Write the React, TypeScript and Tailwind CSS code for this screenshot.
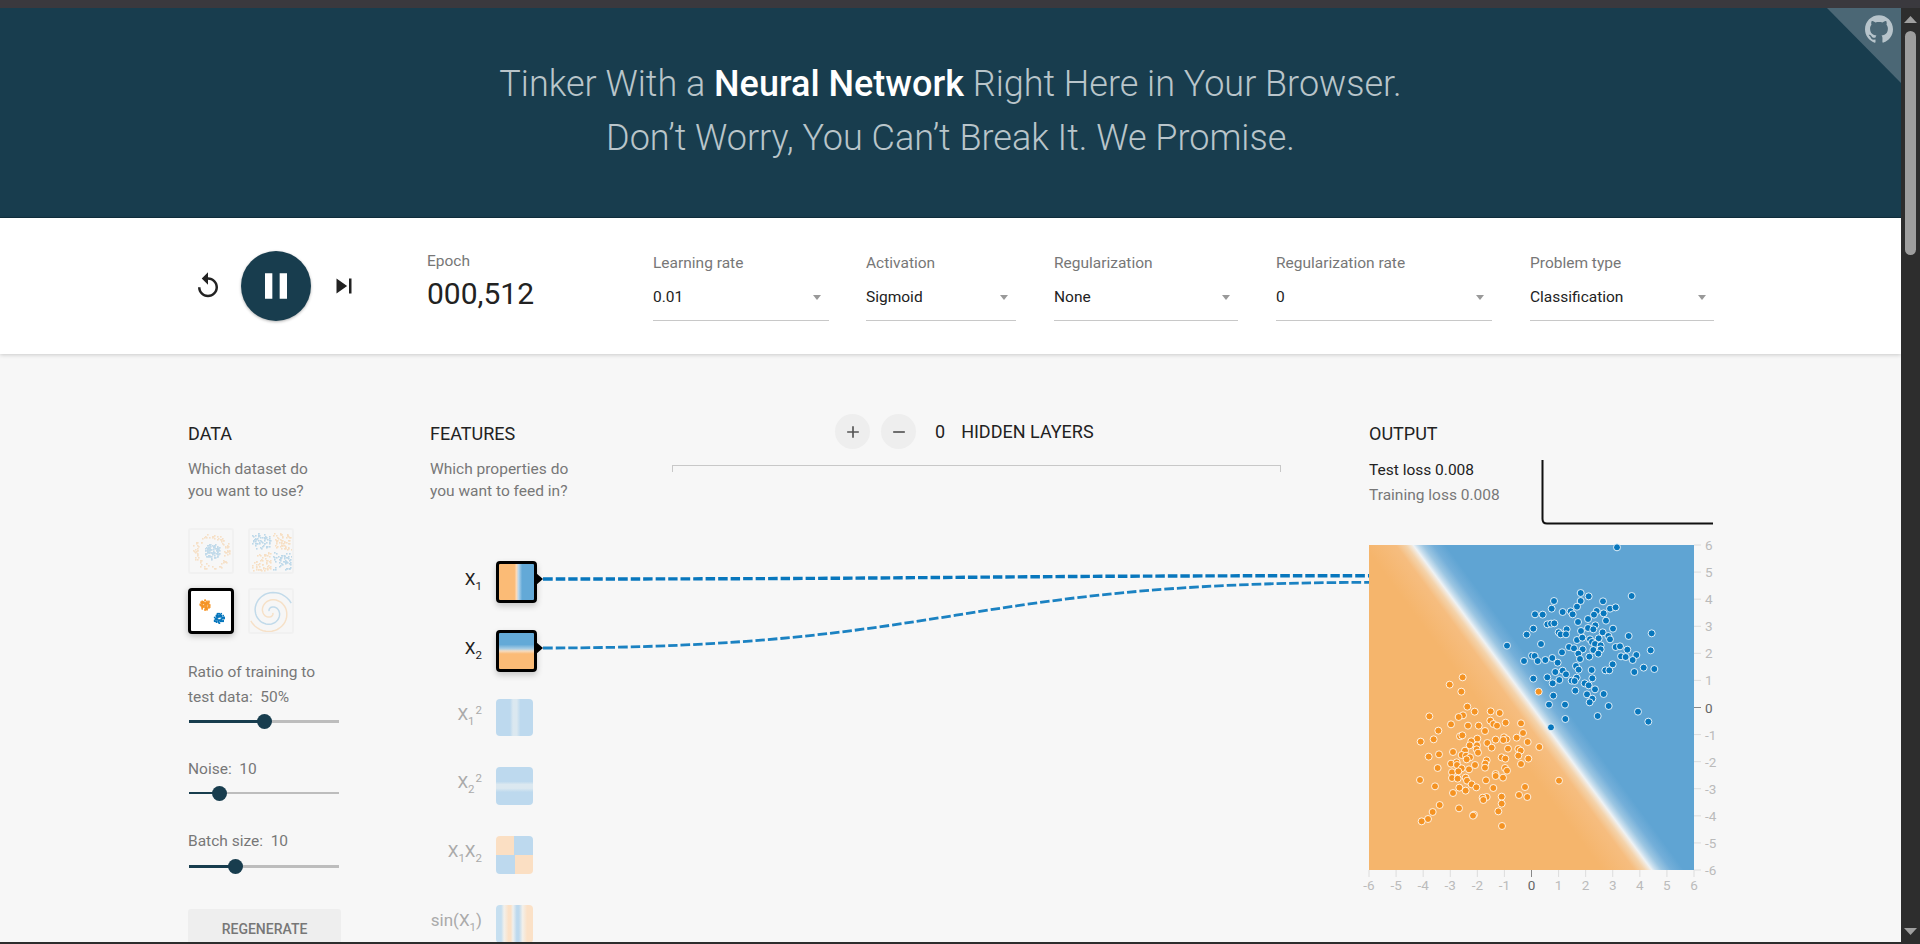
import React from "react";
import { SiGithub } from "react-icons/si";

const blue: [number, number][] = [[801,412],[845,558],[692,549],[716,559],[612,573],[692,573],[759,574],[605,596],[681,590],[780,596],[797,592],[740,603],[555,613],[578,614],[638,606],[662,604],[668,613],[732,614],[761,610],[714,627],[768,632],[684,636],[592,643],[603,641],[613,640],[736,646],[550,656],[714,654],[730,658],[789,656],[693,663],[650,658],[626,667],[632,673],[648,673],[758,667],[530,674],[905,670],[836,678],[775,678],[681,690],[697,683],[720,688],[746,685],[780,688],[726,696],[735,702],[573,702],[471,707],[752,706],[657,711],[672,715],[698,718],[730,720],[752,718],[797,711],[810,709],[832,719],[902,721],[636,727],[685,731],[745,731],[546,737],[554,738],[859,735],[813,739],[827,741],[848,750],[690,747],[718,740],[607,744],[586,750],[563,753],[522,753],[623,758],[788,763],[678,768],[686,779],[725,780],[766,781],[778,781],[881,773],[913,777],[853,786],[616,786],[638,782],[648,793],[592,802],[550,806],[680,803],[727,805],[628,810],[665,812],[674,813],[608,820],[704,820],[716,826],[735,838],[676,842],[610,857],[711,853],[761,852],[727,866],[719,877],[597,884],[645,884],[776,888],[864,905],[895,935],[743,918],[646,927],[603,952]];
const orangeTop: [number, number][] = [[338,802],[299,824],[334,845],[566,845]];
const orange5: [number, number][] = [[352,80],[339,106],[374,95],[326,111],[238,109],[422,94],[449,99],[421,122],[430,132],[441,137],[467,128],[513,130],[303,133],[354,137],[386,137],[265,152],[405,153],[519,159],[330,169],[337,166],[251,178],[212,185],[382,176],[364,184],[437,179],[462,172],[470,178],[500,173],[460,180],[533,186],[359,196],[381,196],[412,189],[425,203],[474,206],[505,207],[568,201],[512,212],[309,216],[345,212],[380,208],[384,218],[267,223],[335,225],[348,227],[360,232],[236,230],[455,232],[466,236],[505,227],[535,236],[410,241],[350,238],[303,251],[320,247],[321,255],[375,255],[406,251],[405,263],[513,252],[263,264],[335,265],[357,268],[465,264],[471,272],[306,277],[325,274],[437,282],[437,288],[306,294],[323,296],[347,293],[351,302],[459,293],[210,300],[408,301],[627,302],[365,313],[379,322],[255,319],[328,323],[430,324],[525,321],[347,332],[309,339],[507,345],[532,351],[455,350],[410,351],[398,353],[400,360],[269,375],[455,371],[327,385],[248,396],[445,394],[372,404],[369,407],[234,417],[215,424],[456,438]];

function rng(seed: number) {
  let s = seed;
  return () => {
    s = (s * 16807) % 2147483647;
    return s / 2147483647;
  };
}

const ORANGE = "#f59322";
const BLUE = "#0877bd";

function Pixels({ pts, fill }: { pts: [number, number][]; fill: string }) {
  return (
    <g fill={fill}>
      {pts.map((p, i) => (
        <rect key={i} x={Math.round(p[0])} y={Math.round(p[1])} width="1.6" height="1.6" />
      ))}
    </g>
  );
}

function blob(cx: number, cy: number, r: number, n: number, seed: number) {
  const R = rng(seed);
  const out: [number, number][] = [];
  for (let i = 0; i < n; i++) {
    const a = R() * Math.PI * 2;
    const d = Math.sqrt(R()) * r;
    out.push([cx + Math.cos(a) * d, cy + Math.sin(a) * d]);
  }
  return out;
}

function ring(cx: number, cy: number, r: number, n: number, seed: number) {
  const R = rng(seed);
  const out: [number, number][] = [];
  for (let i = 0; i < n; i++) {
    const a = R() * Math.PI * 2;
    const d = r + (R() - 0.5) * 6;
    out.push([cx + Math.cos(a) * d, cy + Math.sin(a) * d]);
  }
  return out;
}

function rectPts(x0: number, y0: number, x1: number, y1: number, n: number, seed: number) {
  const R = rng(seed);
  const out: [number, number][] = [];
  for (let i = 0; i < n; i++) out.push([x0 + R() * (x1 - x0), y0 + R() * (y1 - y0)]);
  return out;
}

function spiral(offset: number) {
  const pts: string[] = [];
  for (let t = 0; t < 2.6 * Math.PI * 1.05; t += 0.15) {
    const r = 2 + t * 2.35;
    pts.push(`${(22 + Math.cos(t + offset) * r).toFixed(1)},${(22 + Math.sin(t + offset) * r).toFixed(1)}`);
  }
  return pts.join(" ");
}

function DataThumb({ kind }: { kind: "circle" | "xor" | "gauss" | "spiral" }) {
  const selected = kind === "gauss";
  return (
    <div
      className={
        selected
          ? "w-[46px] h-[46px] rounded-[4px] border-[3px] border-black bg-white shadow-[0_2px_6px_rgba(0,0,0,0.25)] overflow-hidden"
          : "w-[46px] h-[46px] rounded-[3px] border-2 border-[#f1f1f1] overflow-hidden"
      }
    >
      <svg viewBox="0 0 42 42" className="w-full h-full block">
        {kind === "circle" && (
          <g opacity="0.22">
            <Pixels pts={ring(21, 21, 16, 90, 11)} fill={ORANGE} />
            <Pixels pts={blob(22, 21, 8, 90, 23)} fill={BLUE} />
          </g>
        )}
        {kind === "xor" && (
          <g opacity="0.24">
            <Pixels pts={rectPts(2, 2, 20, 19, 55, 5)} fill={BLUE} />
            <Pixels pts={rectPts(23, 22, 41, 40, 55, 7)} fill={BLUE} />
            <Pixels pts={rectPts(23, 2, 41, 19, 55, 9)} fill={ORANGE} />
            <Pixels pts={rectPts(2, 22, 20, 40, 55, 13)} fill={ORANGE} />
          </g>
        )}
        {kind === "gauss" && (
          <g>
            <Pixels pts={blob(14, 14, 5.5, 70, 31)} fill={ORANGE} />
            <Pixels pts={blob(29, 28, 5.5, 70, 37)} fill={BLUE} />
          </g>
        )}
        {kind === "spiral" && (
          <g fill="none" strokeWidth="1.5" opacity="0.22" transform="translate(-1,0)">
            <polyline points={spiral(3.6)} stroke={BLUE} />
            <polyline points={spiral(0.46)} stroke={ORANGE} />
          </g>
        )}
      </svg>
    </div>
  );
}

function Select({ label, value, className }: { label: string; value: string; className: string }) {
  return (
    <div className={className}>
      <div className="text-[15.5px] leading-[20px] text-[#777]">{label}</div>
      <div className="mt-[10px] h-[29px] flex items-center justify-between pr-[8px] border-b border-[#c8c8c8] pb-[8px] box-content">
        <span className="text-[15.5px] leading-[20px] text-[#222]">{value}</span>
        <svg width="8" height="5" viewBox="0 0 8 5">
          <polygon points="0,0 8,0 4,5" fill="#999" />
        </svg>
      </div>
    </div>
  );
}

function Slider({ dark, thick }: { dark: string; thick?: boolean }) {
  const h = thick ? "h-[3px]" : "h-[2px]";
  return (
    <div className="ml-[1px] w-[150px] h-4 flex items-center">
      <div className={`${dark} ${h} bg-[#183d4e]`} />
      <div className="w-[15px] h-[15px] rounded-full bg-[#183d4e] -mx-[7px] z-10 shrink-0" />
      <div className={`flex-1 ${h} bg-[#bdbdbd]`} />
    </div>
  );
}

function Sub({ n }: { n: string }) {
  return <span className="text-[11.5px] relative top-[5px]">{n}</span>;
}
function Sup({ n }: { n: string }) {
  return <span className="text-[11.5px] relative -top-[6px] ml-[1px]">{n}</span>;
}

function FeatureRow({
  label,
  thumb,
  active,
}: {
  label: React.ReactNode;
  thumb: string;
  active?: boolean;
}) {
  return (
    <div className="h-[68.8px] flex items-start">
      <div
        className={
          active
            ? "w-[52px] text-right text-[17px] leading-[24px] text-[#222] mt-[6px]"
            : "w-[52px] text-right text-[17px] leading-[24px] text-[#aaa] mt-[3px] whitespace-nowrap flex justify-end"
        }
      >
        <span className="whitespace-nowrap">{label}</span>
      </div>
      <div className={`ml-[14px] ${thumb}`} />
    </div>
  );
}

function LinkOverlay() {
  return (
    <svg width="1901" height="588" className="absolute left-0 top-0 pointer-events-none" viewBox="0 354 1901 588" fill="none">
      <path d="M543,579 C956,579 956,575.7 1369,575.7" stroke="#0877bd" strokeWidth="3.4" strokeDasharray="9.5 3" />
      <path d="M543,648 C956,648 956,582.4 1369,582.4" stroke="#0877bd" strokeWidth="2.8" strokeDasharray="9.5 3" opacity="0.92" />
      <polygon points="536,573 543,579 536,585" fill="#000" />
      <polygon points="536,642 543,648 536,654" fill="#000" />
    </svg>
  );
}

function Plot() {
  const ticks = Array.from({ length: 13 }, (_, i) => i - 6);
  const s = 325 / 12;
  return (
    <svg width="344" height="352" viewBox="0 0 344 352" className="block overflow-visible">
      <defs>
        <linearGradient
          id="heat"
          gradientUnits="userSpaceOnUse"
          x1={163.5 - 40 * 0.806}
          y1={162.5 + 40 * 0.592}
          x2={163.5 + 40 * 0.806}
          y2={162.5 - 40 * 0.592}
        >
          <stop offset="0" stopColor="#f5b56c" />
          <stop offset="0.325" stopColor="#f6bd7f" />
          <stop offset="0.425" stopColor="#f4d3ab" />
          <stop offset="0.475" stopColor="#f3e7d8" />
          <stop offset="0.5" stopColor="#eef2f4" />
          <stop offset="0.5375" stopColor="#c9dfee" />
          <stop offset="0.6" stopColor="#9cc6e2" />
          <stop offset="0.7" stopColor="#74afd9" />
          <stop offset="0.825" stopColor="#5fa4d3" />
          <stop offset="1" stopColor="#5fa4d3" />
        </linearGradient>
      </defs>
      <rect x="0" y="0" width="325" height="325" fill="url(#heat)" />
      {orangeTop.concat(orange5.map((p) => [p[0], p[1] + 810] as [number, number])).map((p, i) => (
        <circle key={i} cx={(p[0] - 57) / 3} cy={(p[1] - 405) / 3} r="3.5" fill={ORANGE} stroke="#fff" strokeOpacity="0.85" strokeWidth="1" />
      ))}
      {blue.map((p, i) => (
        <circle key={i} cx={(p[0] - 57) / 3} cy={(p[1] - 405) / 3} r="3.5" fill={BLUE} stroke="#fff" strokeOpacity="0.85" strokeWidth="1" />
      ))}
      {ticks.map((t) => {
        const zero = t === 0;
        const y = 162.5 - t * s;
        const x = 162.5 + t * s;
        return (
          <g key={t} fontSize="13.5" fontFamily="Roboto, sans-serif" fill={zero ? "#666" : "#bbb"}>
            <line x1="325" x2="332" y1={y} y2={y} stroke={zero ? "#888" : "#ddd"} />
            <text x="336" y={y + 5}>{t}</text>
            <line x1={x} x2={x} y1="325" y2="332" stroke={zero ? "#888" : "#ddd"} />
            <text x={x} y="345" textAnchor="middle">{t}</text>
          </g>
        );
      })}
    </svg>
  );
}

export default function App() {
  return (
    <div className="w-[1920px] h-[944px] overflow-hidden flex flex-col bg-[#2d2d2d] [font-family:Roboto,sans-serif]">
      <div className="h-2 shrink-0 bg-[#3a393e]" />
      <div className="flex flex-1 min-h-0">
        <div className="w-[1901px] flex flex-col min-h-0 overflow-hidden">
          <header className="relative h-[210px] shrink-0 bg-[#183d4e] pt-[49px] text-center text-[36px] leading-[54px] font-light text-[#b9c5ca] border-b border-[#10303e]">
            <div>
              Tinker With a <span className="font-medium text-white">Neural Network</span> Right Here in Your Browser.
            </div>
            <div>Don’t Worry, You Can’t Break It. We Promise.</div>
            <svg width="74" height="75" viewBox="0 0 74 75" className="absolute right-0 top-0">
              <polygon points="0,0 74,0 74,75" fill="#4b6775" />
            </svg>
            <SiGithub className="absolute right-[8px] top-[7px] text-[#b7c4cb]" size={28} />
          </header>

          <section className="h-[136px] shrink-0 bg-white flex items-center shadow-[0_1px_4px_rgba(0,0,0,0.18)] z-10 relative">
            <svg width="30" height="30" viewBox="0 0 24 24" className="ml-[193px]" fill="#222">
              <path d="M12 5V1L7 6l5 5V7c3.31 0 6 2.69 6 6s-2.69 6-6 6-6-2.69-6-6H4c0 4.42 3.58 8 8 8s8-3.58 8-8-3.58-8-8-8z" />
            </svg>
            <div className="ml-[18px] w-[70px] h-[70px] rounded-full bg-[#183d4e] flex items-center justify-center shadow-[0_1px_3px_rgba(0,0,0,0.3)]">
              <svg width="44" height="44" viewBox="0 0 24 24" fill="#fff">
                <path d="M6 19h4V5H6v14zm8-14v14h4V5h-4z" />
              </svg>
            </div>
            <svg width="30" height="30" viewBox="0 0 24 24" className="ml-[18px]" fill="#222">
              <path d="M6 18l8.5-6L6 6v12zM16 6v12h2V6h-2z" />
            </svg>
            <div className="ml-[68px] w-[226px] -mt-[9px]">
              <div className="text-[15.5px] leading-[20px] text-[#777]">Epoch</div>
              <div className="text-[30px] leading-[36px] mt-[5px] text-[#222]">000,512</div>
            </div>
            <Select label="Learning rate" value="0.01" className="w-[176px] mt-[1px]" />
            <Select label="Activation" value="Sigmoid" className="ml-[37px] w-[150px] mt-[1px]" />
            <Select label="Regularization" value="None" className="ml-[38px] w-[184px] mt-[1px]" />
            <Select label="Regularization rate" value="0" className="ml-[38px] w-[216px] mt-[1px]" />
            <Select label="Problem type" value="Classification" className="ml-[38px] w-[184px] mt-[1px]" />
          </section>

          <main className="relative flex-1 min-h-0 overflow-hidden bg-[#f7f7f7] flex pl-[188px]">
            <LinkOverlay />
            <div className="w-[242px] shrink-0 pt-[68px]">
              <h4 className="text-[18px] leading-[24px] text-[#222]">DATA</h4>
              <p className="mt-3 text-[15.5px] leading-[22px] text-[#777]">
                Which dataset do
                <br />
                you want to use?
              </p>
              <div className="mt-[26px] grid grid-cols-[46px_46px] gap-x-[14px] gap-y-[14px]">
                <DataThumb kind="circle" />
                <DataThumb kind="xor" />
                <DataThumb kind="gauss" />
                <DataThumb kind="spiral" />
              </div>
              <div className="mt-[26px] text-[15.5px] leading-[25px] text-[#777]">
                Ratio of training to
                <br />
                test data:&nbsp; 50%
              </div>
              <div className="mt-[3px]">
                <Slider dark="w-[75px]" thick />
              </div>
              <div className="mt-[28px] text-[15.5px] leading-[25px] text-[#777]">Noise:&nbsp; 10</div>
              <div className="mt-[3px]">
                <Slider dark="w-[30px]" />
              </div>
              <div className="mt-[28px] text-[15.5px] leading-[25px] text-[#777]">Batch size:&nbsp; 10</div>
              <div className="mt-[4px]">
                <Slider dark="w-[46px]" thick />
              </div>
              <button className="mt-[35px] w-[153px] h-[40px] rounded-[3px] bg-[#eeeeee] text-[14px] font-medium text-[#777] uppercase">
                Regenerate
              </button>
            </div>

            <div className="w-[242px] shrink-0 pt-[68px]">
              <h4 className="text-[18px] leading-[24px] text-[#222]">FEATURES</h4>
              <p className="mt-3 text-[15.5px] leading-[22px] text-[#777]">
                Which properties do
                <br />
                you want to feed in?
              </p>
              <div className="mt-[59px]">
                <FeatureRow
                  active
                  label={<>X<Sub n="1" /></>}
                  thumb="w-[41px] h-[42px] rounded-[4px] border-[3px] border-black shadow-[0_3px_6px_rgba(0,0,0,0.2)] bg-[linear-gradient(90deg,#fbbb76_0%,#fbbb76_44%,#fad9b8_50%,#b7d6ec_56%,#63a9d7_66%,#63a9d7_100%)]"
                />
                <FeatureRow
                  active
                  label={<>X<Sub n="2" /></>}
                  thumb="w-[41px] h-[42px] rounded-[4px] border-[3px] border-black shadow-[0_3px_6px_rgba(0,0,0,0.2)] bg-[linear-gradient(180deg,#63a9d7_0%,#63a9d7_32%,#a9cde4_44%,#f5dcc0_50%,#fbbb76_58%,#fbbb76_100%)]"
                />
                <FeatureRow
                  label={<>X<Sub n="1" /><Sup n="2" /></>}
                  thumb="w-[37px] h-[37px] rounded-[4px] bg-[linear-gradient(90deg,#bdd9ee_0%,#bdd9ee_38%,#dbe8f0_46%,#dbe8f0_56%,#bdd9ee_66%,#bdd9ee_100%)]"
                />
                <FeatureRow
                  label={<>X<Sub n="2" /><Sup n="2" /></>}
                  thumb="w-[37px] h-[38px] rounded-[4px] bg-[linear-gradient(180deg,#bdd9ee_0%,#bdd9ee_38%,#dbe8f0_46%,#dbe8f0_56%,#bdd9ee_66%,#bdd9ee_100%)]"
                />
                <FeatureRow
                  label={<>X<Sub n="1" />X<Sub n="2" /></>}
                  thumb="w-[37px] h-[38px] rounded-[4px] bg-[conic-gradient(#bdd9ee_0deg,#bdd9ee_90deg,#fbdfc3_90deg,#fbdfc3_180deg,#bdd9ee_180deg,#bdd9ee_270deg,#fbdfc3_270deg,#fbdfc3_360deg)]"
                />
                <FeatureRow
                  label={<>sin(X<Sub n="1" />)</>}
                  thumb="w-[37px] h-[38px] rounded-[4px] bg-[linear-gradient(90deg,#c6dff0_0%,#c6dff0_14%,#f3f0ea_22%,#fbe1c7_34%,#fbe1c7_40%,#eef0ef_46%,#bdd9ee_56%,#bdd9ee_62%,#f3f0ea_72%,#fbe1c7_84%,#fbe1c7_100%)]"
                />
              </div>
            </div>

            <div className="w-[609px] shrink-0 pt-[60px]">
              <div className="flex items-center pl-[163px]">
                <div className="w-[35px] h-[35px] rounded-full bg-[#eeeeee] flex items-center justify-center">
                  <svg width="20" height="20" viewBox="0 0 24 24" fill="#555">
                    <path d="M19 13h-6v6h-2v-6H5v-2h6V5h2v6h6v2z" />
                  </svg>
                </div>
                <div className="ml-[11px] w-[35px] h-[35px] rounded-full bg-[#eeeeee] flex items-center justify-center">
                  <svg width="20" height="20" viewBox="0 0 24 24" fill="#555">
                    <path d="M19 13H5v-2h14v2z" />
                  </svg>
                </div>
                <span className="ml-[19px] text-[18px] leading-[24px] text-[#222]">0</span>
                <span className="ml-[16px] text-[18px] leading-[24px] text-[#222]">HIDDEN LAYERS</span>
              </div>
              <div className="mt-[16px] h-[7px] border-t border-x border-[#c8c8c8]" />
            </div>

            <div className="ml-[88px] w-[344px] shrink-0 pt-[68px]">
              <h4 className="text-[18px] leading-[24px] text-[#222]">OUTPUT</h4>
              <div className="mt-3 flex justify-between">
                <div className="text-[15.5px] leading-[25px]">
                  <div className="text-[#222]">Test loss 0.008</div>
                  <div className="text-[#777]">Training loss 0.008</div>
                </div>
                <svg width="172" height="67" viewBox="0 0 172 67" fill="none">
                  <path d="M1.5,2 L1.5,61 Q1.5,65.5 6,65.5 L172,65.5" stroke="#111" strokeWidth="2" />
                </svg>
              </div>
              <div className="mt-[20px]">
                <Plot />
              </div>
            </div>
          </main>
        </div>

        <div className="w-[19px] shrink-0 bg-[#2d2d2d] flex flex-col items-center pt-2">
          <svg width="13" height="7" viewBox="0 0 13 7">
            <polygon points="6.5,0 13,7 0,7" fill="#a0a0a0" />
          </svg>
          <div className="mt-2 w-[11px] h-[224px] rounded-full bg-[#9e9e9e]" />
          <svg width="13" height="7" viewBox="0 0 13 7" className="mt-auto mb-[7px]">
            <polygon points="0,0 13,0 6.5,7" fill="#a0a0a0" />
          </svg>
        </div>
      </div>
      <div className="h-[2px] shrink-0 bg-[#2d2d2d]" />
    </div>
  );
}
